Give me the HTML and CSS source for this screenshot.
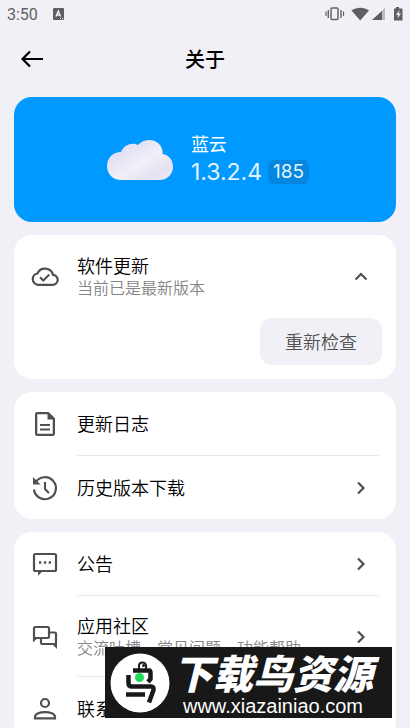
FILE: index.html
```html
<!DOCTYPE html>
<html lang="zh-CN">
<head>
<meta charset="utf-8">
<meta name="viewport" content="width=device-width, initial-scale=1">
<title>关于</title>
<link rel="stylesheet" href="styles.css">
</head>
<body>
<div class="app">
  <div class="status">
    <span class="clock">3:50</span>
    <svg class="badge-a" width="12" height="12" viewBox="0 0 12 12" aria-hidden="true"><rect width="11" height="12" rx="1" fill="#5f5f61"/><path d="M3 8.5 5.3 3 7.6 8.5M4 7h2.8" fill="none" stroke="#f1f0f6" stroke-width="1.4"/><path d="M7 10.5h1M9 10.5h1" stroke="#f1f0f6"/></svg>
    <svg class="signals" width="80" height="16" viewBox="0 0 80 16" aria-hidden="true">
      <g fill="none" stroke="#646467"><rect x="5" y="2" width="7" height="11.5" rx="1" stroke-width="1.5"/><path d="M0 5.500v4.500M17.500 5.500v4.500" stroke-width="1.200"/><path d="M2.300 4v8M15 4v8" stroke-width="1.400"/></g>
      <path d="M25.500 4.500C30.500 .7 38 .7 43 4.500L34.200 14.500Z" fill="#5f5f61"/>
      <path d="M59 2v12H46Z" fill="#bbbabf"/><path d="M56 5v9H46Z" fill="#5f5f61"/>
      <path d="M70 1h3v1.500H76.500V14.500h-8.500V2.500h2Z" fill="#5f5f61"/><path d="m73.500 4-3.500 5h2.200l-.7 3.500 3.500-5h-2.200Z" fill="#f1f0f6"/>
    </svg>
  </div>
  <header class="topbar">
    <button class="back" type="button" aria-label="返回"><svg width="24" height="20" viewBox="0 0 24 20"><path d="M23 10H2.500M10 2.500 2.500 10l7.500 7.500" fill="none" stroke="#000" stroke-width="2.200"/></svg></button>
    <h1>关于</h1>
  </header>
  <main>
    <section class="hero">
      <svg class="cloud" width="66" height="42" viewBox="0 0 66 42" aria-hidden="true">
        <defs><linearGradient id="sky" x1="0" y1="0" x2="1" y2="1"><stop offset="0" stop-color="#efedf8"/><stop offset=".25" stop-color="#e2e0f3"/><stop offset=".55" stop-color="#f2eff7"/><stop offset=".8" stop-color="#e5e2f3"/><stop offset="1" stop-color="#f0edf7"/></linearGradient></defs>
        <path d="M14 41C6 41 0 35 0 27S6 13 14 13C17 5 26 3 31 6C40-4 57 2 55.500 15C62 16 66 21 66 28C66 35 60 41 53 41Z" fill="url(#sky)"/>
      </svg>
      <div class="about">
        <div class="name">蓝云</div>
        <div class="release"><span class="version">1.3.2.4</span><span class="build">185</span></div>
      </div>
    </section>

    <section class="card">
      <div class="row update">
        <svg class="icon" viewBox="0 0 28 28"><path d="M7 21.800h14.500a5 5 0 0 0 .4-10A8.200 8.200 0 0 0 6.500 10.500 5.700 5.700 0 0 0 7 21.800Z" fill="none" stroke="#505050" stroke-width="2.200"/><path d="m9 14.200 3.300 3.300 6-6" fill="none" stroke="#505050" stroke-width="2"/></svg>
        <div class="text"><div class="title">软件更新</div><div class="sub">当前已是最新版本</div></div>
        <svg class="chevron" viewBox="0 0 16 16"><path d="m2.500 10.500 5.500-5.500 5.500 5.500" /></svg>
      </div>
      <div class="actions"><button class="check" type="button">重新检查</button></div>
    </section>

    <section class="card">
      <a class="row" href="#log">
        <svg class="icon" viewBox="0 0 28 28"><path fill-rule="evenodd" fill="#505050" d="M6.300 2h11.400L24 8.300V23.700a2.300 2.300 0 0 1-2.300 2.300H6.300A2.300 2.300 0 0 1 4 23.700V4.300A2.300 2.300 0 0 1 6.300 2ZM6.300 4.300V23.700H21.700V9.500H16.500V4.300Z"/><path d="M9 15h10M9 19.500h10" stroke="#505050" stroke-width="2"/></svg>
        <div class="text line"><div class="title">更新日志</div></div>
      </a>
      <a class="row" href="#history">
        <svg class="icon" viewBox="0 0 28 28"><path d="M4.500 8.500A11 11 0 1 1 3 15.500" fill="none" stroke="#505050" stroke-width="2.200"/><path d="M2 3v7.500h7.500Z" fill="#505050"/><path d="M14 8v7l4 4" fill="none" stroke="#505050" stroke-width="2.100"/></svg>
        <div class="text"><div class="title">历史版本下载</div></div>
        <svg class="chevron" viewBox="0 0 16 16"><path d="m5 2.500 5.500 5.500L5 13.500"/></svg>
      </a>
    </section>

    <section class="card">
      <a class="row" href="#notice">
        <svg class="icon" viewBox="0 0 28 28"><rect x="3" y="4" width="22" height="17" rx="1.500" fill="none" stroke="#505050" stroke-width="2.200"/><path d="M7 21v4.700L11.700 21Z" fill="#505050"/><path d="M8 12.500h2.300M12.900 12.500h2.300M17.700 12.500H20" stroke="#505050" stroke-width="2.300"/></svg>
        <div class="text line"><div class="title">公告</div></div>
        <svg class="chevron" viewBox="0 0 16 16"><path d="m5 2.500 5.500 5.500L5 13.500"/></svg>
      </a>
      <a class="row tall" href="#community">
        <svg class="icon" viewBox="0 0 28 28"><path d="M3 17.500V5.200Q3 4 4.200 4H16.800Q18 4 18 5.200V13.800Q18 15 16.800 15H3" fill="none" stroke="#505050" stroke-width="2.200"/><path d="M2 13v6.500L6.500 15Z" fill="#505050"/><path d="M18 9.500H23.800Q25 9.500 25 10.700V21H11.200Q10 21 10 19.800V15" fill="none" stroke="#505050" stroke-width="2.200"/><path d="M26 19v7l-5-5Z" fill="#505050"/></svg>
        <div class="text line"><div class="title">应用社区</div><div class="sub">交流吐槽、常见问题、功能帮助</div></div>
        <svg class="chevron" viewBox="0 0 16 16"><path d="m5 2.500 5.500 5.500L5 13.500"/></svg>
      </a>
      <a class="row" href="#contact">
        <svg class="icon" viewBox="0 0 28 28"><circle cx="14" cy="8" r="4" fill="none" stroke="#505050" stroke-width="2.200"/><path d="M4 23.300V22C4 15.500 24 15.500 24 22v1.300Z" fill="none" stroke="#505050" stroke-width="2.200"/></svg>
        <div class="text"><div class="title">联系我们</div></div>
        <svg class="chevron" viewBox="0 0 16 16"><path d="m5 2.500 5.500 5.500L5 13.500"/></svg>
      </a>
    </section>
  </main>
</div>
<aside class="mark">
  <svg width="60" height="60" viewBox="0 0 60 60" aria-hidden="true">
    <circle cx="30" cy="30" r="29.500" fill="#fff"/>
    <g fill="none" stroke="#181818" stroke-width="4.500" stroke-linejoin="round"><path d="M23 17.500H39Q40.500 17.500 40.500 20V26L38 29"/><path d="M18.500 22V30Q18.500 33.500 22 33.500H41Q44 33.500 43.500 37L39 49.500"/><path d="M16 41.500H35"/><path d="M29 16V12Q30 9 33 9.500Q37 10 36 16" stroke-width="2"/></g>
    <circle cx="33.500" cy="12.500" r="1.500" fill="#181818"/><circle cx="29.500" cy="24.500" r="4.500" fill="#1fdb55"/>
  </svg>
  <div class="mark-text"><strong>下载鸟资源</strong><span>www.xiazainiao.com</span></div>
</aside>
</body>
</html>
```
FILE: styles.css
```css
* { box-sizing: border-box; }
body {
  margin: 0;
  background: #f1f0f6;
  color: #000;
  font-family: Roboto, "Noto Sans CJK SC", sans-serif;
}
.app { height: 100vh; overflow: hidden; }
.status {
  display: flex;
  align-items: center;
  height: 28px;
  padding: 0 4px 0 7px;
  color: #5f5f61;
  font-size: 16px;
}
.badge-a { margin-left: 15px; }
.signals { margin-left: auto; overflow: visible; }
.topbar {
  display: grid;
  grid-template-columns: 48px 1fr 48px;
  align-items: center;
  height: 62px;
  padding: 0 8px;
}
.topbar h1 {
  margin: 0;
  padding-top: 2px;
  text-align: center;
  font-size: 20px;
  line-height: 28px;
  font-weight: 500;
}
button { border: 0; font: inherit; cursor: pointer; }
.back {
  display: grid;
  place-items: center;
  height: 48px;
  padding: 0;
  background: none;
}
main {
  display: flex;
  flex-direction: column;
  gap: 13px;
  padding: 7px 14px 14px;
}
.hero {
  display: flex;
  align-items: center;
  justify-content: center;
  gap: 18px;
  padding: 36px 0 36px 6px;
  border-radius: 18px;
  background: #0099ff;
  color: #fff;
}
.name { font-size: 18px; line-height: 24px; font-weight: 400; }
.release {
  display: flex;
  align-items: center;
  gap: 6px;
  height: 29px;
  font-family: Inter, sans-serif;
  color: #e3f3ff;
}
.version { font-size: 23px; line-height: 24px; }
.build {
  padding: 0 5px;
  border-radius: 6px;
  background: #0587df;
  font-size: 19px;
  line-height: 24px;
}
.card { border-radius: 18px; background: #fff; overflow: hidden; }
.row {
  display: flex;
  align-items: center;
  min-height: 63px;
  padding: 0 17px;
  color: inherit;
  text-decoration: none;
}
.icon { flex: none; width: 28px; height: 28px; }
.text {
  flex: 1;
  align-self: stretch;
  display: flex;
  flex-direction: column;
  justify-content: center;
  margin-left: 18px;
  padding-top: 2px;
}
.line { border-bottom: 1px solid #e6e6e8; min-height: 64px; margin-right: -26px; }
.row .line:last-child { margin-right: 0; }
.tall .line { min-height: 81px; }
.title { font-size: 18px; line-height: 23px; font-weight: 350; }
.sub { font-size: 16px; line-height: 22px; font-weight: 350; color: #858585; }
.chevron {
  flex: none;
  width: 16px;
  height: 16px;
  margin-right: 10px;
  fill: none;
  stroke: #505050;
  stroke-width: 2.2;
}
.update { min-height: 83px; }
.actions { display: flex; justify-content: flex-end; padding: 0 14px 14px; }
.check {
  padding: 12px 25px 9px;
  border-radius: 12px;
  background: #f1f0f6;
  color: #505050;
  font-size: 18px;
  line-height: 26px;
  font-weight: 350;
}
.mark {
  position: fixed;
  right: 18px;
  bottom: 10px;
  display: flex;
  align-items: center;
  gap: 3px;
  width: 287px;
  height: 71px;
  padding-left: 5px;
  background: #181818;
  color: #fff;
}
.mark svg { flex: none; }
.mark-text { display: flex; flex-direction: column; align-items: center; padding-top: 4px; white-space: nowrap; }
.mark-text strong {
  font-size: 40px;
  line-height: 42px;
  font-weight: 900;
  font-style: italic;
}
.mark-text span { font-family: "Liberation Sans", sans-serif; font-size: 20px; line-height: 18px; }
```
